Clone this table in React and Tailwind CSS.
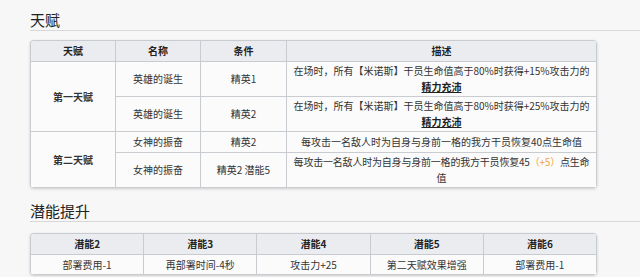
import React from 'react';

const font = { fontFamily: '"Noto Sans CJK SC", "Noto Sans", sans-serif' };

function Heading({ children, className = '' }) {
  return (
    <h2 className={`border-b border-[#d8d8d8] text-[15px] leading-[20px] text-[#222] ${className}`}>{children}</h2>
  );
}

const th = 'border-r border-b border-[#c8ccd1] bg-[#eaecf0] font-bold text-[#222] h-[21px] p-0';
const td = 'border-r border-b border-[#c8ccd1] bg-[#fbfbfb] text-[#333] px-[2px] py-0';

export default function App() {
  return (
    <div className="relative h-[277px] w-[640px] overflow-hidden bg-[#f7f7f7] pl-[30px]" style={font}>
      <Heading className="pt-[10px]">天赋</Heading>
      <div className="mt-[9px] w-[567px] overflow-hidden rounded-[4px] border-l border-t border-[#c8ccd1] shadow-[0_1px_3px_rgba(0,0,0,0.18)]">
        <table className="w-full table-fixed border-separate border-spacing-0 text-center text-[10px] leading-[16px]">
          <colgroup>
            <col className="w-[85px]" />
            <col className="w-[85px]" />
            <col className="w-[86px]" />
            <col />
          </colgroup>
          <thead>
            <tr>
              <th className={th}>天赋</th>
              <th className={th}>名称</th>
              <th className={th}>条件</th>
              <th className={th}>描述</th>
            </tr>
          </thead>
          <tbody>
            <tr className="h-[35px]">
              <td rowSpan={2} className={`${td} bg-[#eaecf0] font-bold text-[#222]`}>第一天赋</td>
              <td className={td}>英雄的诞生</td>
              <td className={td}>精英1</td>
              <td className={td}>
                <span className="whitespace-nowrap">在场时，所有【米诺斯】干员生命值高于80%时获得+15%攻击力的</span>
                <br />
                <span className="font-bold text-[#222] underline">精力充沛</span>
              </td>
            </tr>
            <tr className="h-[35px]">
              <td className={td}>英雄的诞生</td>
              <td className={td}>精英2</td>
              <td className={td}>
                <span className="whitespace-nowrap">在场时，所有【米诺斯】干员生命值高于80%时获得+25%攻击力的</span>
                <br />
                <span className="font-bold text-[#222] underline">精力充沛</span>
              </td>
            </tr>
            <tr className="h-[21px]">
              <td rowSpan={2} className={`${td} bg-[#eaecf0] font-bold text-[#222]`}>第二天赋</td>
              <td className={td}>女神的振奋</td>
              <td className={td}>精英2</td>
              <td className={`${td} whitespace-nowrap`}>每攻击一名敌人时为自身与身前一格的我方干员恢复40点生命值</td>
            </tr>
            <tr className="h-[35px]">
              <td className={td}>女神的振奋</td>
              <td className={td}>精英2 潜能5</td>
              <td className={td}>
                <span className="whitespace-nowrap tracking-[-0.2px]">
                  每攻击一名敌人时为自身与身前一格的我方干员恢复45<span className="text-[#f0a53c]">（+5）</span>点生命
                </span>
                <br />
                值
              </td>
            </tr>
          </tbody>
        </table>
      </div>

      <Heading className="mt-[3px] pt-[10px]">潜能提升</Heading>
      <div className="mt-[11px] w-[567px] overflow-hidden rounded-[4px] border-l border-t border-[#c8ccd1] shadow-[0_1px_3px_rgba(0,0,0,0.18)]">
        <table className="w-full table-fixed border-separate border-spacing-0 text-center text-[10px] leading-[16px]">
          <thead>
            <tr>
              {['潜能2', '潜能3', '潜能4', '潜能5', '潜能6'].map((h) => (
                <th key={h} className={`${th} h-[20px]`}>{h}</th>
              ))}
            </tr>
          </thead>
          <tbody>
            <tr className="h-[20px]">
              {['部署费用-1', '再部署时间-4秒', '攻击力+25', '第二天赋效果增强', '部署费用-1'].map((c, i) => (
                <td key={i} className={td}>{c}</td>
              ))}
            </tr>
          </tbody>
        </table>
      </div>
    </div>
  );
}
